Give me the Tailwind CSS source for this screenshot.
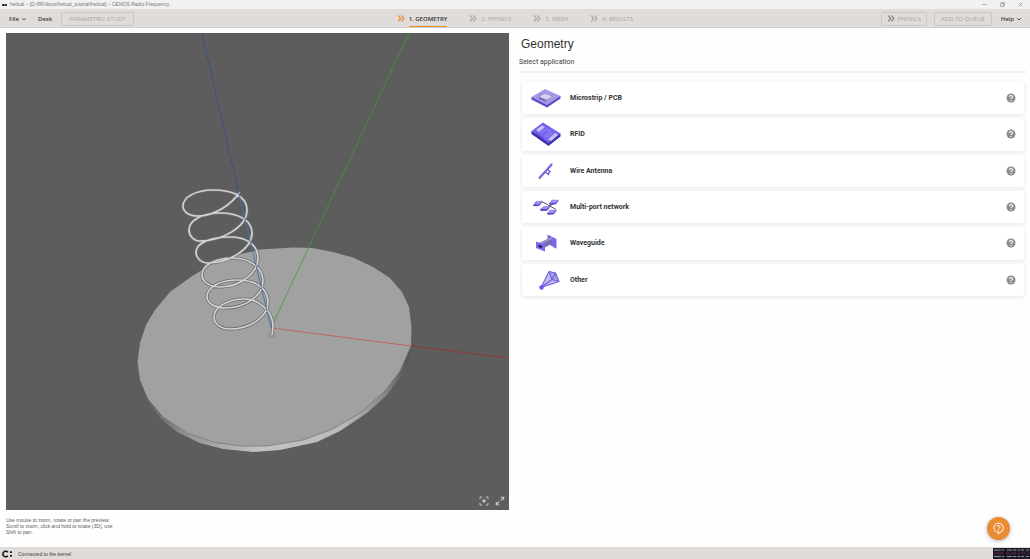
<!DOCTYPE html>
<html lang="en">
<head>
    <meta charset="UTF-8">
    <meta name="viewport" content="width=device-width, initial-scale=1.0">
    <title>helical – CENOS Radio Frequency</title>
    <script src="https://cdn.jsdelivr.net/npm/@tailwindcss/browser@4"></script>
</head>
<body class="h-screen flex flex-col overflow-hidden bg-[#fefefe] font-[Roboto,sans-serif] text-[#3c3c3c]">
    <!-- Shared symbols -->
    <svg class="hidden">
        <symbol id="chevrons" viewBox="0 0 8 7">
            <path d="M.5.5h1.6L4.4 3.5 2.1 6.5H.5L2.8 3.5zM3.7.5h1.6L7.6 3.5 5.3 6.5H3.7L6 3.5z" fill="currentColor"/>
        </symbol>
        <symbol id="caret" viewBox="0 0 6 4">
            <path d="M1 1l2 2 2-2" fill="none" stroke="currentColor" stroke-width=".8"/>
        </symbol>
        <symbol id="help" viewBox="0 0 10 10">
            <circle cx="5" cy="5" r="4.500" fill="#8d8d8d"/>
            <path d="M3.500 4c0-2 3-2 3-.1C6.500 4.900 5 4.900 5 6M5 6.900v1" fill="none" stroke="#fff" stroke-width="1.100"/>
        </symbol>
    </svg>

    <!-- Title bar -->
    <header class="h-[9px] shrink-0 flex items-center bg-[#f1f1f1] pl-[2px] pr-[7px] font-['Liberation_Sans',sans-serif] text-[5px] leading-[9px] text-[#777]">
        <svg class="w-[5px] h-[4px] mr-[3px]" viewBox="0 0 5 4"><path d="M0 1h2l.5.6L3 1h2v2H3.200l-.7-.6-.7.6H0z" fill="#333"/></svg>
        <span>helical – [D:/RF/docs/helical_tutorial/helical] – CENOS Radio Frequency</span>
        <div class="ml-auto flex items-center gap-[13px]">
            <button type="button" aria-label="Minimize"><svg class="w-[5px] h-[5px]" viewBox="0 0 5 5"><path d="M.5 2.500h4" stroke="#888" stroke-width=".7"/></svg></button>
            <button type="button" aria-label="Restore"><svg class="w-[5px] h-[5px]" viewBox="0 0 5 5"><path d="M.5 1.500h3v3h-3zM1.500 1.500v-1h3v3h-1" fill="none" stroke="#888" stroke-width=".6"/></svg></button>
            <button type="button" aria-label="Close"><svg class="w-[5px] h-[5px]" viewBox="0 0 5 5"><path d="M.5.5l4 4M4.500.5l-4 4" stroke="#888" stroke-width=".6"/></svg></button>
        </div>
    </header>

    <!-- Toolbar -->
    <nav class="h-[19px] shrink-0 grid grid-cols-[1fr_auto_1fr] items-center bg-[#e0dcd9] pt-px border-b border-[#d2cecb] font-['Open_Sans',sans-serif] text-[6px] leading-[10px] text-[#aaa6a4]">
        <div class="flex items-center pl-[9px]">
            <button type="button" class="flex items-center gap-[2px] font-semibold text-[#3c3c3c]">File <svg class="w-[6px] h-[4px]"><use href="#caret"/></svg></button>
            <button type="button" class="ml-[11px] font-semibold text-[#3c3c3c]">Desk</button>
            <button type="button" class="ml-[9px] h-[14px] px-[7px] border border-[#cbc7c4] rounded-[2px]">PARAMETRIC STUDY</button>
        </div>
        <div class="flex h-full items-stretch gap-[22px]">
            <a href="#" class="flex items-center gap-[4px] text-[#333]"><svg class="w-[8px] h-[7px] text-[#ee8a2c]"><use href="#chevrons"/></svg><span class="h-[17px] pt-[4px] border-b border-[#ee8a2c] font-semibold">1. GEOMETRY</span></a>
            <a href="#" class="flex items-center gap-[4px]"><svg class="w-[8px] h-[7px]"><use href="#chevrons"/></svg>2. PHYSICS</a>
            <a href="#" class="flex items-center gap-[4px]"><svg class="w-[8px] h-[7px]"><use href="#chevrons"/></svg>3. MESH</a>
            <a href="#" class="flex items-center gap-[4px]"><svg class="w-[8px] h-[7px]"><use href="#chevrons"/></svg>4. RESULTS</a>
        </div>
        <div class="flex items-center justify-end gap-[7px] pr-[8px]">
            <button type="button" class="flex items-center gap-[3px] h-[14px] px-[5px] border border-[#cbc7c4] rounded-[2px]"><svg class="w-[8px] h-[7px] text-[#858280]"><use href="#chevrons"/></svg>PHYSICS</button>
            <button type="button" class="h-[14px] px-[6px] border border-[#cbc7c4] rounded-[2px]">ADD TO QUEUE</button>
            <button type="button" class="ml-[2px] flex items-center gap-[2px] font-semibold text-[#3c3c3c]">Help <svg class="w-[6px] h-[4px]"><use href="#caret"/></svg></button>
        </div>
    </nav>

    <main class="flex-1 min-h-0 grid grid-cols-[503fr_508fr] gap-[10px] pt-[5px] pl-[6px] pr-[3px]">
        <!-- 3D preview -->
        <section class="flex flex-col min-h-0">
            <div class="relative flex-1 min-h-0 bg-[#5d5d5d]">
                <svg class="absolute inset-0 w-full h-full" viewBox="6 33 503 477" preserveAspectRatio="xMidYMid slice">
                    <defs>
                        <linearGradient id="rim" x1="0" x2="1" y1="0" y2="0">
                            <stop offset="0" stop-color="#555"/>
                            <stop offset=".2" stop-color="#999"/>
                            <stop offset=".45" stop-color="#c2c2c2"/>
                            <stop offset=".75" stop-color="#bbb"/>
                            <stop offset=".9" stop-color="#888"/>
                            <stop offset="1" stop-color="#505050"/>
                        </linearGradient>
                        <path id="coil" d="M239 193C231 205 214 216 198 216C189 216 183 212 183 206C183 197 196 190 213 190C232 190 247 196 247 210C247 227 222 241 200 241C194 241 189 236 189 230C189 220 203 213 220 213C238 213 252 220 252 233C252 249 229 263 208 263C201 263 196 258 196 252C196 243 211 237 230 237C245 237 258 244 258 258C258 274 239 287 220 287C210 287 202 282 202 275C202 265 216 258 233 258C250 258 263 268 263 281C263 296 245 308 225 308C215 308 207 303 207 297C207 287 220 280 238 280C255 280 268 288 268 302C268 317 250 329 230 329C221 329 214 324 214 317C214 307 228 299 245 299C258 299 273 311 273 326L272 335"/>
                    </defs>
                    <path d="M138 362L140 383 147 400 160 418 177 432 200 443 223 449 253 452 280 450 317 442 340 431 367 413 387 395 403 373 410 357 411 335z" fill="url(#rim)"/>
                    <path d="M137.500 361.500L140 343 146 325 155 310 170 292 190 277.500 210 265 233 256 260 249.500 293 247.500 312 248 333 252 353 257.500 373 267 390 278 402 292 409 307 411.500 327 411 346 400 371 385 391 360 413 333 429 303 440 267 446 240 446 213 442 187 433 163 417 148 399 140 380z" fill="#a1a1a1"/>
                    <path d="M411 346L400 371 385 391 360 413 333 429 303 440 267 446 240 446 213 442 187 433 163 417 148 399" fill="none" stroke="#737373" stroke-width=".7"/>
                    <!-- Axes -->
                    <path d="M202 33L238 190" stroke="#36507f" stroke-width=".9"/>
                    <path d="M271 328L409 33" stroke="#439a39" stroke-width=".8"/>
                    <path d="M272 328L411 346" stroke="#c9544f" stroke-width=".8"/>
                    <path d="M411 346L509 358" stroke="#9c3232" stroke-width=".8"/>
                    <!-- Helix -->
                    <ellipse cx="272" cy="335.500" rx="4" ry="2.500" fill="none" stroke="#858585" stroke-width=".6"/>
                    <use href="#coil" fill="none" stroke="#6c6c6c" stroke-width="3.200" stroke-linecap="round"/>
                    <use href="#coil" fill="none" stroke="#d2d2d2" stroke-width="1.700" stroke-linecap="round"/>
                    <path d="M238 190L271 328" stroke="#4a6fa8" stroke-width=".9"/>
                </svg>
                <!-- Preview controls -->
                <div class="absolute right-[4px] bottom-[4px] flex gap-[6px] text-[#c4c4c4]">
                    <button type="button" aria-label="Fit to view">
                        <svg class="w-[10px] h-[10px]" viewBox="0 0 10 10"><path d="M1 3.200V1h2.200M6.800 1H9v2.200M9 6.800V9H6.800M3.200 9H1V6.800" fill="none" stroke="currentColor" stroke-width="1"/><circle cx="5" cy="5" r="1.800" fill="currentColor"/></svg>
                    </button>
                    <button type="button" aria-label="Full screen">
                        <svg class="w-[10px] h-[10px]" viewBox="0 0 10 10"><path d="M5.700 1.300H8.700V4.300M4.300 8.700H1.300V5.700M8.500 1.500L5.700 4.300M1.500 8.500l2.800-2.800" fill="none" stroke="currentColor" stroke-width="1.100"/></svg>
                    </button>
                </div>
            </div>
            <p class="h-[37px] pt-[7px] w-[116px] font-['Liberation_Sans',sans-serif] text-[5px] leading-[6px] text-[#5c5c5c]">Use mouse to zoom, rotate or pan the preview.<br>Scroll to zoom, click and hold to rotate (3D), use Shift to pan.</p>
        </section>

        <!-- Application list -->
        <section>
            <h1 class="pl-[2px] pt-[4px] font-['Liberation_Sans',sans-serif] text-[12px] leading-[14px] text-[#333]">Geometry</h1>
            <h2 class="mt-[6px] text-[7px] leading-[10px]">Select application</h2>
            <div class="mt-[4px] h-[2px] bg-[#f2f1fa]"></div>
            <div class="mx-[3px] mt-[9px] h-[214px] grid auto-rows-fr gap-[4px] text-[7px] leading-[10px] font-bold text-[#333]">
                <div class="flex items-center pl-[9px] pr-[8px] rounded-[2px] bg-white shadow-[0_1px_4px_#e4e3ee]">
                    <svg class="w-[30px] h-[26px]" viewBox="0 0 30 26">
                        <path d="M.5 12v2.500L16 22.500l13.500-9V11z" fill="#5849c4"/>
                        <path d="M.5 12L14 4 29.500 11 16 20z" fill="#a79bee"/>
                        <path d="M5 12L14.500 6.300 25.500 11 16 17z" fill="#bdb4f2" stroke="#7d72c4" stroke-width=".5"/>
                        <path d="M7.500 11.800L13.500 8.300 22 11 16 15z" fill="#d8d4f5" stroke="#665ba5" stroke-width=".6"/>
                        <path d="M8 13l7.500 3.300" stroke="#3b3472" stroke-width="1" stroke-dasharray="1.500 .6"/>
                    </svg>
                    <a href="#" class="ml-[9px]">Microstrip / PCB</a>
                    <button type="button" aria-label="Help: Microstrip / PCB" class="ml-auto"><svg class="w-[10px] h-[10px]"><use href="#help"/></svg></button>
                </div>
                <div class="flex items-center pl-[9px] pr-[8px] rounded-[2px] bg-white shadow-[0_1px_4px_#e4e3ee]">
                    <svg class="w-[30px] h-[26px]" viewBox="0 0 30 26">
                        <path d="M.5 10v3L17.500 25 29.500 15.500v-3z" fill="#3e30a8"/>
                        <path d="M.5 10L12 1.500 29.500 12.500 17.500 22z" fill="#7564f0"/>
                        <path d="M5 9l6-4.500 3 1.800-6 4.700zM17 18.500l7-6.500 3 1.800-6.500 6z" fill="#c9c3f3"/>
                        <path d="M10 12l6-4 4 2.500-6 4.500 2 1.300 6-4.500" fill="none" stroke="#a094f2" stroke-width=".8"/>
                        <path d="M5 12.500l8 5.500" stroke="#4a3cc0" stroke-width=".8"/>
                    </svg>
                    <a href="#" class="ml-[9px]">RFID</a>
                    <button type="button" aria-label="Help: RFID" class="ml-auto"><svg class="w-[10px] h-[10px]"><use href="#help"/></svg></button>
                </div>
                <div class="flex items-center pl-[9px] pr-[8px] rounded-[2px] bg-white shadow-[0_1px_4px_#e4e3ee]">
                    <svg class="w-[30px] h-[26px]" viewBox="0 0 30 26">
                        <path d="M8 20.500L21 6" stroke="#6253d4" stroke-width="2"/>
                        <path d="M8 20L21 5.500" stroke="#9488f4" stroke-width=".9"/>
                        <path d="M13.500 13.500l4.500 3.500M16 11l3 2.500-2 2.500" fill="none" stroke="#6e60dc" stroke-width="1.400"/>
                    </svg>
                    <a href="#" class="ml-[9px]">Wire Antenna</a>
                    <button type="button" aria-label="Help: Wire Antenna" class="ml-auto"><svg class="w-[10px] h-[10px]"><use href="#help"/></svg></button>
                </div>
                <div class="flex items-center pl-[9px] pr-[8px] rounded-[2px] bg-white shadow-[0_1px_4px_#e4e3ee]">
                    <svg class="w-[30px] h-[26px]" viewBox="0 0 30 26">
                        <path d="M10 7L25 15.500M12 16.500L24 8.500" stroke="#3f3d55" stroke-width=".9"/>
                        <path d="M2 11l3-3.500h6l-.3 1.500-2.700 3-5 .3zM9 15.500l4-3.300h6l-.3 1.500-2.700 3-6 .3zM18 9.500l3-3.500h6.500l-.3 1.500-2.700 3-6 .3zM16 19.500l3-3.500h6.500l-.3 1.500-2.700 3-6 .3z" fill="#5142bf"/>
                        <path d="M2.500 10.500l2.800-3.300H11L8 10.700zM9.500 15l3.500-3h6l-3 3.300zM18.500 9L21 5.700h6.500L24.500 9.200zM16.500 19l2.500-3.300h6.500L22.500 19.200z" fill="#9b8ff3"/>
                    </svg>
                    <a href="#" class="ml-[9px]">Multi-port network</a>
                    <button type="button" aria-label="Help: Multi-port network" class="ml-auto"><svg class="w-[10px] h-[10px]"><use href="#help"/></svg></button>
                </div>
                <div class="flex items-center pl-[9px] pr-[8px] rounded-[2px] bg-white shadow-[0_1px_4px_#e4e3ee]">
                    <svg class="w-[30px] h-[26px]" viewBox="0 0 30 26">
                        <path d="M16.500 4.500l9 4.500v9.500l-2-.5-7-5z" fill="#7a68f0"/>
                        <path d="M9 12.500l12-5.500v6.500L13 18z" fill="#776bad"/>
                        <path d="M9 12.500l12-5.500v2L11 14z" fill="#9c92cf"/>
                        <path d="M5 11.500l9 3v7l-9-3.500z" fill="#7a68f0"/>
                        <path d="M7.500 14.500l3.500 1.300v2.400L7.500 17z" fill="#252043"/>
                    </svg>
                    <a href="#" class="ml-[9px]">Waveguide</a>
                    <button type="button" aria-label="Help: Waveguide" class="ml-auto"><svg class="w-[10px] h-[10px]"><use href="#help"/></svg></button>
                </div>
                <div class="flex items-center pl-[9px] pr-[8px] rounded-[2px] bg-white shadow-[0_1px_4px_#e4e3ee]">
                    <svg class="w-[30px] h-[26px]" viewBox="0 0 30 26">
                        <path d="M9.500 20.500L18 4.500l6.500 1.500 3.500 8.500z" fill="#c3bdea"/>
                        <path d="M18 4.500l6.500 1.500 3.500 8.500-7-2.500z" fill="#aaa2db"/>
                        <path d="M10 20.500L18 4.500l6.500 1.500 3.500 8.500zM18 4.500l3 8 7 2M21 12.500L10 20.500M21 12.500l3.500-6.500" fill="none" stroke="#6c5ce7" stroke-width="1.100" stroke-linejoin="round"/>
                        <circle cx="10.500" cy="20.500" r="2.200" fill="#6c5ce7"/>
                    </svg>
                    <a href="#" class="ml-[9px]">Other</a>
                    <button type="button" aria-label="Help: Other" class="ml-auto"><svg class="w-[10px] h-[10px]"><use href="#help"/></svg></button>
                </div>
            </div>
        </section>
    </main>

    <!-- Support button -->
    <button type="button" aria-label="Support" class="absolute right-[20px] bottom-[19px] w-[23px] h-[23px] rounded-full bg-[#ea8c33] flex items-center justify-center shadow-[0_1px_4px_#b9b7c8]">
        <svg class="w-[13px] h-[13px]" viewBox="0 0 13 13" fill="none" stroke="#fff"><path d="M6.500 1.200a4.600 4.600 0 0 1 1.800 8.900L6.500 12V10.400a4.600 4.600 0 0 1 0-9.200z"/><path d="M5 4.900c0-2 3-2 3 0C8 6.200 6.500 6 6.500 7.200M6.500 8v1"/></svg>
    </button>

    <!-- Status bar -->
    <footer class="h-[12px] shrink-0 flex items-center bg-[#e0dcd9] pl-[1px] pt-px font-['Liberation_Sans',sans-serif] text-[5px] leading-[8px]">
        <svg class="w-[12px] h-[8px]" viewBox="0 0 12 8"><path d="M6.800 2.200A2.800 2.800 0 1 0 6.800 5.800" fill="none" stroke="#111" stroke-width="1.600"/><path d="M9 1.300h1.800v1.800H9zM9 5h1.800v1.800H9z" fill="#111"/></svg>
        <span class="ml-[5px]">Connected to the kernel</span>
        <svg class="ml-auto self-end w-[37px] h-[11px]" viewBox="0 0 37 11">
            <path d="M0 0h37v11H0z" fill="#1c1c2b"/>
            <path d="M1 2h35M1 8.500h35" stroke="#8b8b9c" stroke-width="1" stroke-dasharray="7 1 3 2 5 1"/>
            <path d="M1 5.200h35" stroke="#6b2638" stroke-width="1" stroke-dasharray="9 2 4 2"/>
            <path d="M12 0v11M24 0v11" stroke="#0c0c18"/>
        </svg>
    </footer>
</body>
</html>
